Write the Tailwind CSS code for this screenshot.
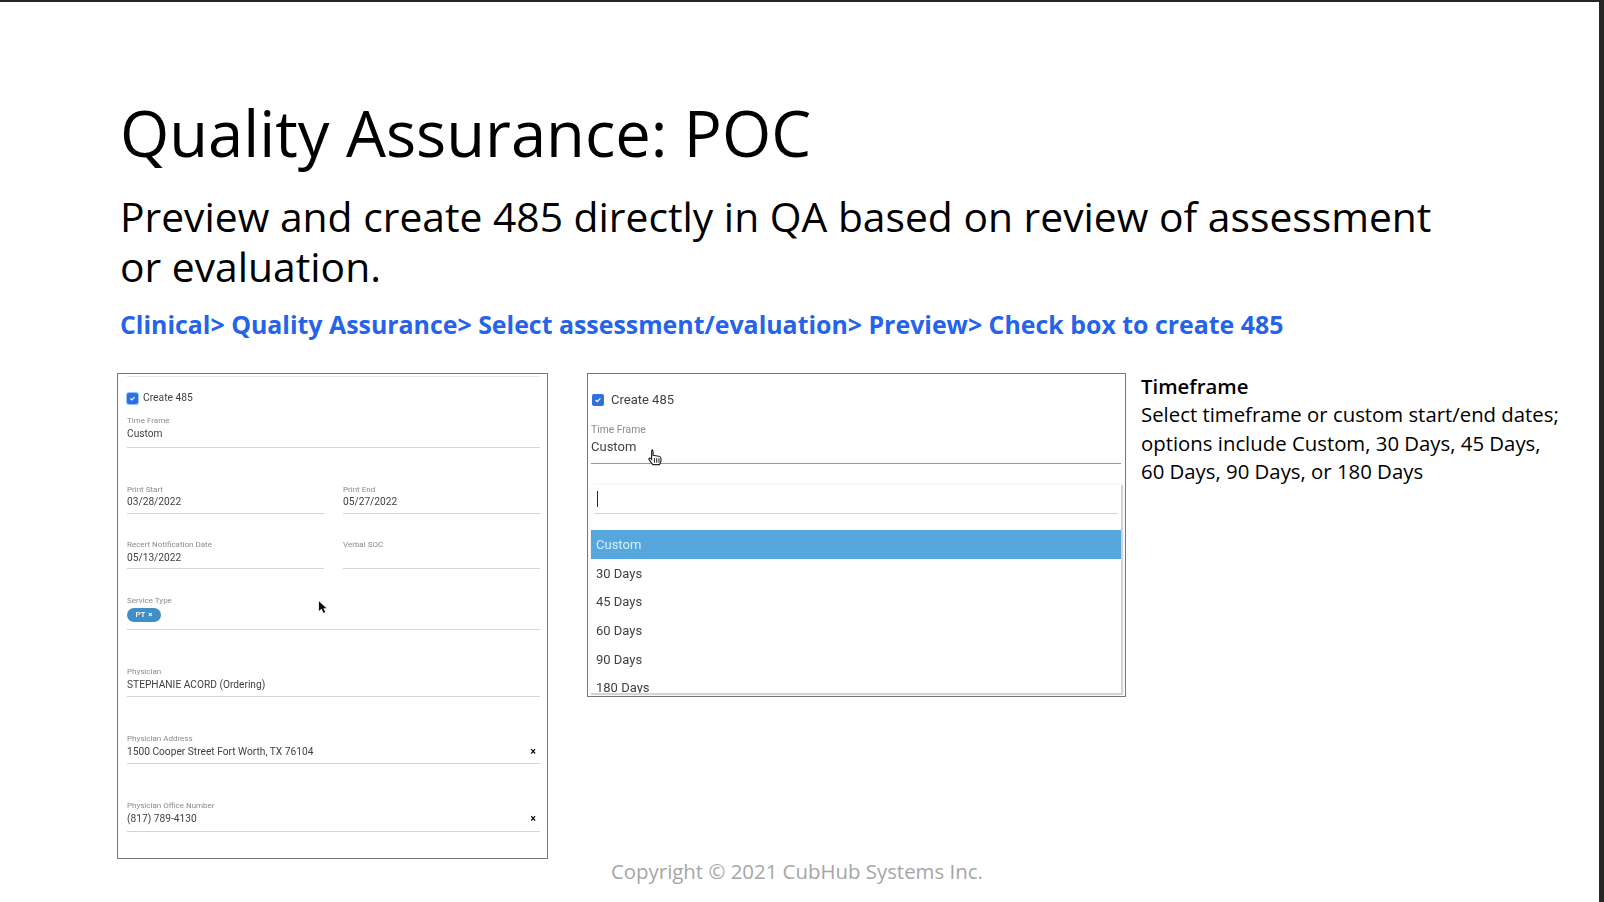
<!DOCTYPE html>
<html lang="en">
<head>
    <meta charset="UTF-8">
    <title>Quality Assurance: POC</title>
    <script src="https://cdn.jsdelivr.net/npm/@tailwindcss/browser@4"></script>
</head>
<body class="bg-white font-['Open_Sans',sans-serif] text-black overflow-hidden">
    <div class="relative w-[1604px] h-[902px] border-t-2 border-r-[5px] border-[#262626] overflow-hidden">

        <div class="pl-[120px] pt-[95px]">
            <h1 class="text-[63.300px] leading-[72px] h-[72px]">Quality Assurance: POC</h1>
            <p class="mt-[22px] w-[1335px] text-[40.800px] leading-[50px]">Preview and create 485 directly in QA based on review of assessment or evaluation.</p>
            <p class="mt-[15px] text-[24.900px] leading-[36px] font-bold text-[#2563eb]">Clinical&gt; Quality Assurance&gt; Select assessment/evaluation&gt; Preview&gt; Check box to create 485</p>
        </div>

        <div class="flex items-start pl-[117px] mt-[31px]">
            <!-- left form -->
            <div class="relative w-[431px] h-[486px] border border-[#777] p-px pl-[9px] pr-[7px] font-['Roboto',sans-serif] text-[#3f3f46] blur-[0.4px]">
                <div class="h-px bg-gray-200 mt-[1px]"></div>
                <div class="flex items-center gap-[5px] mt-[14px] h-[14px] text-[10.300px]">
                    <span class="flex items-center justify-center w-[11px] h-[11px] rounded-[2px] bg-[#2f6fe0] text-white ring-1 ring-blue-300">
                        <svg viewBox="0 0 10 10" class="w-[7px] h-[7px]"><path d="M2 5l2 2 4-4" fill="none" stroke="currentColor" stroke-width="1.6"/></svg>
                    </span>
                    Create 485
                </div>
                <div class="mt-[10px] h-[33px] border-b border-gray-300">
                    <div class="text-[8px] leading-[11px] text-[#8b8b8b]">Time Frame</div>
                    <div class="text-[10.200px] leading-[16px]">Custom</div>
                </div>
                <div class="grid grid-cols-2 gap-x-[19px]">
                    <div class="mt-[36px] h-[30px] border-b border-gray-300">
                        <div class="text-[8px] leading-[11px] text-[#8b8b8b]">Print Start</div>
                        <div class="text-[10.200px] leading-[14px]">03/28/2022</div>
                    </div>
                    <div class="mt-[36px] h-[30px] border-b border-gray-300">
                        <div class="text-[8px] leading-[11px] text-[#8b8b8b]">Print End</div>
                        <div class="text-[10.200px] leading-[14px]">05/27/2022</div>
                    </div>
                    <div class="mt-[25px] h-[30px] border-b border-gray-300">
                        <div class="text-[8px] leading-[11px] text-[#8b8b8b]">Recert Notification Date</div>
                        <div class="text-[10.200px] leading-[15px]">05/13/2022</div>
                    </div>
                    <div class="mt-[25px] h-[30px] border-b border-gray-300">
                        <div class="text-[8px] leading-[11px] text-[#8b8b8b]">Verbal SOC</div>
                    </div>
                </div>
                <div class="mt-[26px] h-[35px] border-b border-gray-300">
                    <div class="text-[8px] leading-[11px] text-[#8b8b8b]">Service Type</div>
                    <span class="flex items-center justify-center gap-[3px] mt-[2px] w-[34px] h-[14px] rounded-full bg-[#3f8fc6] text-white text-[8px] font-medium">PT <span class="text-[8px] font-bold">×</span></span>
                </div>
                <div class="mt-[36px] h-[31px] border-b border-gray-300">
                    <div class="text-[8px] leading-[11px] text-[#8b8b8b]">Physician</div>
                    <div class="text-[10.200px] leading-[16px]">STEPHANIE ACORD (Ordering)</div>
                </div>
                <div class="mt-[36px] h-[31px] border-b border-gray-300">
                    <div class="text-[8px] leading-[11px] text-[#8b8b8b]">Physician Address</div>
                    <div class="flex justify-between text-[10.200px] leading-[16px]">1500 Cooper Street Fort Worth, TX 76104 <span class="font-bold text-black pr-[4px]">×</span></div>
                </div>
                <div class="mt-[36px] h-[32px] border-b border-gray-300">
                    <div class="text-[8px] leading-[11px] text-[#8b8b8b]">Physician Office Number</div>
                    <div class="flex justify-between text-[10.200px] leading-[16px]">(817) 789-4130 <span class="font-bold text-black pr-[4px]">×</span></div>
                </div>
                <!-- mouse pointer -->
                <svg viewBox="0 0 10 14" class="absolute left-[200px] top-[227px] w-[9px] h-[13px]"><path d="M1 0v11l3-2.500 2 4.500 2-1-2-4.200h3.500z" fill="#111"/></svg>
            </div>

            <!-- right dropdown -->
            <div class="relative ml-[39px] w-[539px] h-[324px] border border-[#777] p-px overflow-hidden font-['Roboto',sans-serif] text-[#3f3f46] blur-[0.4px]">
                <div class="flex items-center gap-[7px] pl-[3px] mt-[17px] h-[16px] text-[13px]">
                    <span class="flex items-center justify-center w-[12px] h-[12px] rounded-[2px] bg-[#2f6fe0] text-white">
                        <svg viewBox="0 0 10 10" class="w-[8px] h-[8px]"><path d="M2 5l2 2 4-4" fill="none" stroke="currentColor" stroke-width="1.6"/></svg>
                    </span>
                    Create 485
                </div>
                <div class="ml-[2px] mr-[3px] mt-[15px] h-[41px] border-b border-[#7c9be0]">
                    <div class="text-[10.300px] leading-[13px] text-[#8b8b8b]">Time Frame</div>
                    <div class="text-[13px] leading-[21px]">Custom</div>
                </div>
                <div class="ml-[2px] mr-[1px] mt-[21px] h-[210px] border-r-2 border-b-2 border-[#d4d4d4] overflow-hidden shadow-[0_0_4px_rgba(0,0,0,0.08)]">
                    <div class="mx-[3px] h-[29px] border-b border-gray-300 flex items-center pl-[3px]">
                        <span class="w-px h-[16px] bg-gray-800"></span>
                    </div>
                    <div class="mt-[16px] h-[29px] pl-[5px] flex items-center bg-[#55a7de] text-[#d6eefb] text-[13px]">Custom</div>
                    <div class="h-[28.700px] pl-[5px] flex items-center text-[13px]">30 Days</div>
                    <div class="h-[28.700px] pl-[5px] flex items-center text-[13px]">45 Days</div>
                    <div class="h-[28.700px] pl-[5px] flex items-center text-[13px]">60 Days</div>
                    <div class="h-[28.700px] pl-[5px] flex items-center text-[13px]">90 Days</div>
                    <div class="h-[28.700px] pl-[5px] flex items-center text-[13px]">180 Days</div>
                </div>
                <!-- hand pointer -->
                <svg viewBox="0 0 14 16" class="absolute left-[59px] top-[74px] w-[16px] h-[18px]"><path d="M4 1.500c1 0 1.300.6 1.300 1.500v3.500l5 .8c1.500.3 2 1 2 2v2.500l-1.300 3H5l-3.300-4.500c-.6-1 .6-1.800 1.500-1l.8.800V3c0-1 0-1.500 1-1.500z" fill="#fff" stroke="#222" stroke-width="1"/><path d="M6.500 9v4M8.500 9v4M10.500 9v4" stroke="#222" stroke-width=".9"/></svg>
            </div>

            <div class="ml-[15px] w-[424px] -mt-[1px] text-[20.350px] leading-[28.300px] text-black">
                <div class="font-semibold">Timeframe</div>
                <div>Select timeframe or custom start/end dates; options include Custom, 30 Days, 45 Days, 60 Days, 90 Days, or 180 Days</div>
            </div>
        </div>

        <div class="absolute left-[611px] top-[855px] text-[20.400px] leading-[28px] text-[#a6a6a6]">Copyright © 2021 CubHub Systems Inc.</div>
    </div>
</body>
</html>
